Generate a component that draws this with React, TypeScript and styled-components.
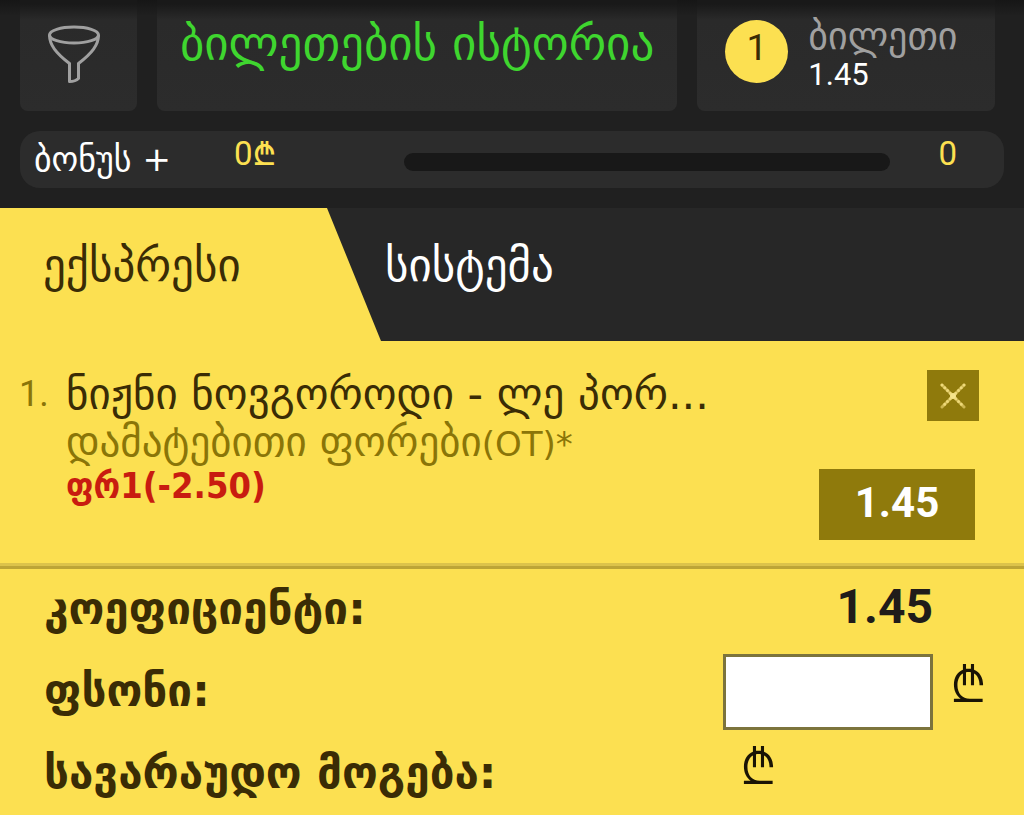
import React, { useState } from "react";
import styled, { createGlobalStyle } from "styled-components";

const Global = createGlobalStyle`
  *, *::before, *::after { box-sizing: border-box; }
  body { margin: 0; background: #fce051; font-family: Roboto, "DejaVu Sans", sans-serif; }
  button { font: inherit; border: 0; padding: 0; cursor: pointer; }
`;

const latin = `Roboto, sans-serif`;
const georgian = `"DejaVu Sans", sans-serif`;

const Page = styled.main`
  min-height: 100vh;
  background: #fce051;
`;

const Header = styled.header`
  display: flex;
  flex-direction: column;
  gap: 20px;
  padding: 0 20px 20px;
  background: linear-gradient(#161616, #202020 16px);
`;

const Cards = styled.div`
  display: flex;
  gap: 20px;
  padding-right: 9px;
`;

const Card = styled.button<{ $basis: number; $grow?: number }>`
  flex: ${(p) => p.$grow ?? 0} 1 ${(p) => p.$basis}px;
  height: 111px;
  display: flex;
  align-items: flex-start;
  border-radius: 0 0 8px 8px;
  background: linear-gradient(#191919 4px, #2a2a2a 20px, #2c2c2c);
  color: #a0a0a0;
`;

const FunnelCard = styled(Card)`
  padding: 24px 0 0 27px;
`;

const HistoryCard = styled(Card)`
  justify-content: center;
  padding-top: 16px;
  color: #3fd62f;
  font: 47px/56px ${georgian};
  white-space: nowrap;
`;

const TicketCard = styled(Card)`
  gap: 20px;
  padding: 16px 0 0 28px;
  text-align: left;
`;

const Count = styled.span`
  width: 63px;
  height: 63px;
  margin-top: 4px;
  border-radius: 50%;
  background: #fce051;
  color: #3a2c05;
  font: 37px/56px ${latin};
  text-align: center;
`;

const TicketText = styled.span`
  display: flex;
  flex-direction: column;
  white-space: nowrap;
`;

const TicketName = styled.span`
  font: 38px/40px ${georgian};
`;

const Odds = styled.span`
  color: #fff;
  font: 31px/38px ${latin};
`;

const Bonus = styled.section`
  display: flex;
  align-items: center;
  height: 57px;
  padding: 0 47px 0 14px;
  border-radius: 20px;
  background: #2c2c2c;
  color: #fff;
`;

const BonusLabel = styled.span`
  flex: 0 0 200px;
  padding-bottom: 2px;
  font: 34px/48px ${georgian};
  white-space: nowrap;
`;

const BonusValue = styled.span<{ $width?: number }>`
  flex: 0 0 ${(p) => (p.$width ? p.$width + "px" : "auto")};
  padding-bottom: 12px;
  color: #fce051;
  font: 33px/44px Roboto, Inter, sans-serif;
`;

const Track = styled.div`
  flex: 1;
  height: 18px;
  margin-right: 48px;
  margin-top: 4px;
  border-radius: 9px;
  background: #181818;
`;

const Tabs = styled.nav`
  display: flex;
  height: 133px;
  background: #272727;
`;

const Tab = styled.button<{ $active?: boolean }>`
  display: flex;
  align-items: flex-start;
  width: ${(p) => (p.$active ? "381px" : "auto")};
  padding: ${(p) => (p.$active ? "30px 0 0 43px" : "30px 0 0 4px")};
  background: ${(p) => (p.$active ? "#fce051" : "transparent")};
  clip-path: ${(p) => (p.$active ? "polygon(0 0, 327px 0, 100% 100%, 0 100%)" : "none")};
  color: ${(p) => (p.$active ? "#3a2c05" : "#fff")};
  font: 45px/56px ${georgian};
`;

const Bet = styled.article`
  display: flex;
  justify-content: space-between;
  height: 228px;
  padding: 29px 45px 0 19px;
  border-bottom: 3px solid #bda536;
  box-shadow: inset 0 -3px #dcc34a;
`;

const BetNumber = styled.span`
  flex: 0 0 47px;
  color: #8a7508;
  font: 36px/48px ${latin};
`;

const BetText = styled.div`
  flex: 1;
  min-width: 0;
  white-space: nowrap;
`;

const Match = styled.div`
  color: #3a2c05;
  font: 43px/48px ${georgian};
`;

const Market = styled.div`
  color: #8a7508;
  font: 41px/48px ${georgian};
`;

const Period = styled.span`
  font-size: 34px;
  line-height: 40px;
`;

const Pick = styled.div`
  color: #c81c10;
  font: bold 36px/40px "DejaVu Sans Condensed", ${georgian};
`;

const BetSide = styled.div`
  display: flex;
  flex-direction: column;
  align-items: flex-end;
  gap: 48px;
`;

const Remove = styled.button`
  display: grid;
  place-items: center;
  width: 52px;
  height: 51px;
  background: #8f7a0c;
`;

const Price = styled.span`
  width: 156px;
  height: 71px;
  margin-right: 4px;
  background: #8f7a0c;
  color: #fff;
  font: bold 42px/68px ${latin};
  text-align: center;
`;

const Totals = styled.section`
  padding: 0 32px 0 44px;
`;

const Row = styled.div`
  display: grid;
  grid-template-columns: 1fr 210px 59px;
  align-items: center;
  height: 82px;
  color: #3a2c05;
`;

const Label = styled.label`
  padding-bottom: 2px;
  font: bold 44px/48px ${georgian};
  white-space: nowrap;
`;

const Total = styled.output`
  padding-bottom: 6px;
  color: #201c1a;
  font: bold 48px/56px ${latin};
  text-align: right;
`;

const Stake = styled.input`
  width: 100%;
  height: 76px;
  padding: 0 12px;
  border: 3px solid #7c743c;
  border-radius: 0;
  background: #fff;
  font: 36px/48px ${latin};
`;

const Lari = styled.span`
  padding: 0 0 16px 17px;
  color: #1a1405;
  font: 300 52px/56px Inter, sans-serif;
`;

function Funnel() {
  return (
    <svg width="54" height="62" viewBox="0 0 54 62" fill="none" stroke="#a0a0a0" strokeWidth="3" strokeLinejoin="round" aria-hidden="true">
      <ellipse cx="27" cy="11" rx="24.500" ry="8" />
      <path d="M2.500 11C2.500 21 9 29 22.500 39.500V57.500C26 57.500 29.500 56.500 31.500 54.500V39.500C45 29 51.500 21 51.500 11" />
    </svg>
  );
}

export default function App() {
  const [tab, setTab] = useState(0);
  return (
    <Page>
      <Global />
      <Header>
        <Cards>
          <FunnelCard $basis={117} aria-label="ფილტრი"><Funnel /></FunnelCard>
          <HistoryCard $basis={521} $grow={1}>ბილეთების ისტორია</HistoryCard>
          <TicketCard $basis={298}>
            <Count>1</Count>
            <TicketText>
              <TicketName>ბილეთი</TicketName>
              <Odds>1.45</Odds>
            </TicketText>
          </TicketCard>
        </Cards>
        <Bonus>
          <BonusLabel>ბონუს +</BonusLabel>
          <BonusValue $width={170}>0₾</BonusValue>
          <Track />
          <BonusValue>0</BonusValue>
        </Bonus>
      </Header>
      <Tabs>
        <Tab $active onClick={() => setTab(0)} aria-pressed={tab === 0}>ექსპრესი</Tab>
        <Tab onClick={() => setTab(1)} aria-pressed={tab === 1}>სისტემა</Tab>
      </Tabs>
      <Bet>
        <BetNumber>1.</BetNumber>
        <BetText>
          <Match>ნიჟნი ნოვგოროდი - ლე პორ...</Match>
          <Market>დამატებითი ფორები<Period>(OT)*</Period></Market>
          <Pick>ფრ1(-2.50)</Pick>
        </BetText>
        <BetSide>
          <Remove aria-label="წაშლა">
            <svg width="26" height="26" viewBox="0 0 26 26" strokeLinecap="round" aria-hidden="true">
              <path d="M2 2L24 24M24 2L2 24" stroke="#cdb650" strokeWidth="3" />
              <path d="M2 2L24 24M24 2L2 24" stroke="#eed979" strokeWidth="3" strokeDasharray="0 3.900" />
              <circle cx="13" cy="13" r="3" fill="#f6e48c" />
            </svg>
          </Remove>
          <Price>1.45</Price>
        </BetSide>
      </Bet>
      <Totals>
        <Row>
          <Label htmlFor="odds">კოეფიციენტი:</Label>
          <Total id="odds">1.45</Total>
        </Row>
        <Row>
          <Label htmlFor="stake">ფსონი:</Label>
          <Stake id="stake" inputMode="decimal" />
          <Lari>₾</Lari>
        </Row>
        <Row>
          <Label htmlFor="win">სავარაუდო მოგება:</Label>
          <Lari as="output" id="win">₾</Lari>
        </Row>
      </Totals>
    </Page>
  );
}
